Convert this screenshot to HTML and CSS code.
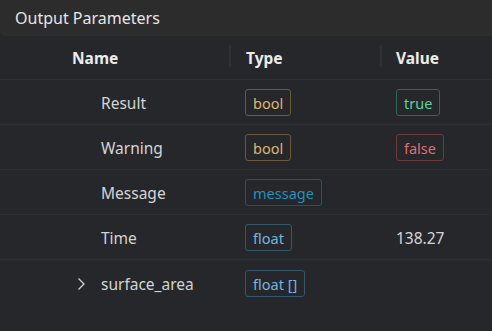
FILE: index.html
```html
<!DOCTYPE html>
<html>
<head>
<meta charset="utf-8">
<link rel="stylesheet" href="styles.css">
</head>
<body>
<div class="panel">
  <div class="title">Output Parameters</div>
  <div class="table">
    <div class="row head">
      <div class="cell c-name"><span class="hname">Name</span></div>
      <div class="cell c-type"><span class="sep"></span>Type</div>
      <div class="cell c-value"><span class="sep"></span>Value</div>
    </div>
    <div class="row">
      <div class="cell c-name"><span class="name">Result</span></div>
      <div class="cell c-type"><span class="badge bool">bool</span></div>
      <div class="cell c-value"><span class="badge true">true</span></div>
    </div>
    <div class="row">
      <div class="cell c-name"><span class="name">Warning</span></div>
      <div class="cell c-type"><span class="badge bool">bool</span></div>
      <div class="cell c-value"><span class="badge false">false</span></div>
    </div>
    <div class="row">
      <div class="cell c-name"><span class="name">Message</span></div>
      <div class="cell c-type"><span class="badge msg">message</span></div>
      <div class="cell c-value"></div>
    </div>
    <div class="row">
      <div class="cell c-name"><span class="name">Time</span></div>
      <div class="cell c-type"><span class="badge float">float</span></div>
      <div class="cell c-value"><span class="num">138.27</span></div>
    </div>
    <div class="row last">
      <div class="cell c-name">
        <svg class="chev" width="10" height="14" viewBox="0 0 10 14"><path d="M2.5 1.5 L8 7 L2.5 12.5" fill="none" stroke="#cfcfcf" stroke-width="1.3"/></svg>
        <span class="name">surface_area</span>
      </div>
      <div class="cell c-type"><span class="badge float">float []</span></div>
      <div class="cell c-value"></div>
    </div>
  </div>
</div>
</body>
</html>
```
FILE: styles.css
```css
html, body {
  margin: 0;
  padding: 0;
  background: #26272b;
  width: 492px;
  height: 331px;
  overflow: hidden;
}
body {
  font-family: "Noto Sans", "Open Sans", sans-serif;
  color: #d6d6d6;
}
.panel {
  display: flex;
  flex-direction: column;
}
.title {
  height: 36px;
  background: #2c2c2d;
  border-bottom-left-radius: 5px;
  color: #e6e6e6;
  font-size: 16px;
  line-height: 36px;
  padding-left: 15px;
  box-sizing: border-box;
}
.table {
  display: flex;
  flex-direction: column;
}
.row {
  display: grid;
  grid-template-columns: 230px 151px 1fr;
  height: 45px;
  box-sizing: border-box;
  align-items: center;
  border-bottom: 1px solid #2e2f33;
  padding-top: 1px;
}
.row.head {
  height: 44px;
  padding-top: 0;
}
.row.last {
  border-bottom: none;
  padding-top: 2px;
}
.cell {
  display: flex;
  align-items: center;
  position: relative;
  height: 100%;
}
.head .cell {
  font-weight: 700;
  font-size: 15.5px;
  color: #ececec;
}
.c-name {
  padding-left: 101px;
}
.head .c-name {
  padding-left: 72px;
}
.c-type {
  padding-left: 15px;
}
.head .c-type {
  padding-left: 16px;
}
.c-value {
  padding-left: 15px;
}
.sep {
  position: absolute;
  left: -1px;
  top: 9px;
  width: 2px;
  height: 22px;
  background: #2f3034;
}
.name {
  font-size: 15.5px;
  color: #d4d4d4;
}
.chev {
  position: absolute;
  left: 76px;
  top: 15px;
}
.num {
  font-size: 15.5px;
  color: #d4d4d4;
}
.badge {
  display: inline-flex;
  align-items: center;
  height: 27px;
  box-sizing: border-box;
  padding: 0 7px;
  border: 1px solid;
  border-radius: 3px;
  font-size: 14.5px;
}
.bool { color: #ddb56e; border-color: #6a5a3d; }
.true { color: #5ccf9f; border-color: #2f6654; }
.false { color: #de6e70; border-color: #6e3a3d; }
.msg { color: #2490bc; border-color: #1d5670; }
.float { color: #72b6e0; border-color: #35586d; }
```
